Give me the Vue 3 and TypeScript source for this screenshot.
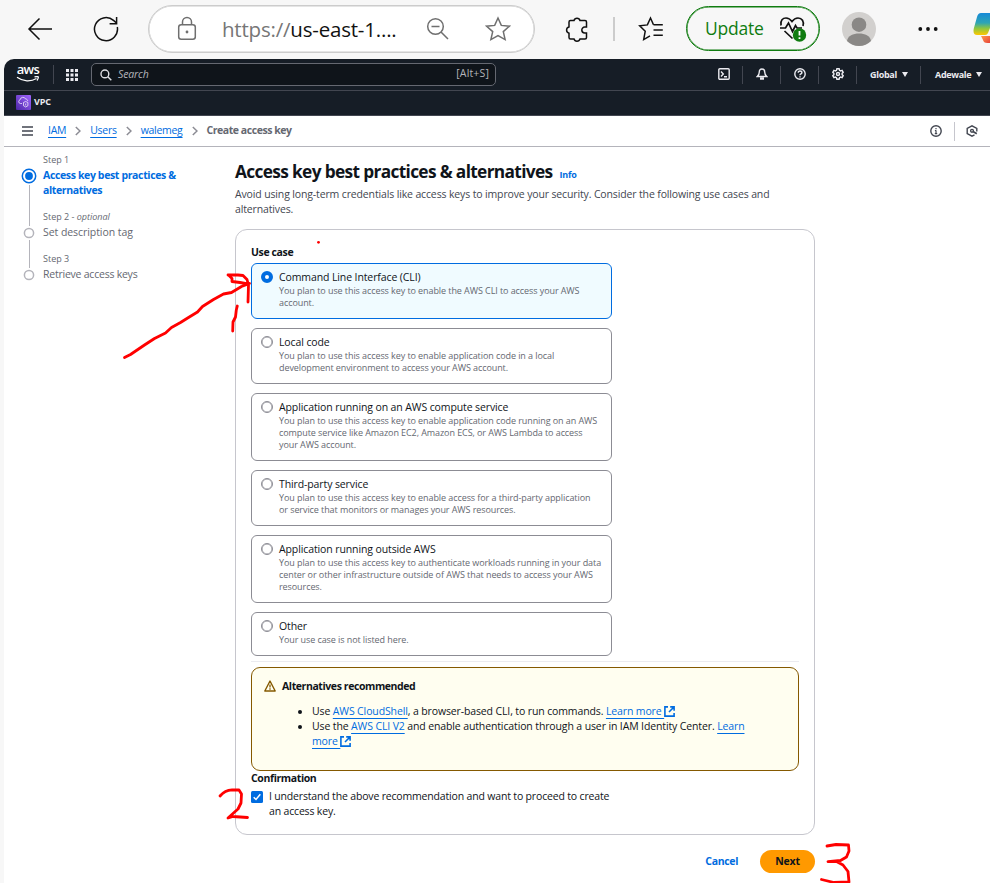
<script setup lang="ts">
import { ref } from 'vue'

interface UseCase {
  id: string
  title: string
  lines: string[]
}

const useCases: UseCase[] = [
  { id: 'cli', title: 'Command Line Interface (CLI)', lines: ['You plan to use this access key to enable the AWS CLI to access your AWS', 'account.'] },
  { id: 'local', title: 'Local code', lines: ['You plan to use this access key to enable application code in a local', 'development environment to access your AWS account.'] },
  { id: 'compute', title: 'Application running on an AWS compute service', lines: ['You plan to use this access key to enable application code running on an AWS', 'compute service like Amazon EC2, Amazon ECS, or AWS Lambda to access', 'your AWS account.'] },
  { id: 'third', title: 'Third-party service', lines: ['You plan to use this access key to enable access for a third-party application', 'or service that monitors or manages your AWS resources.'] },
  { id: 'outside', title: 'Application running outside AWS', lines: ['You plan to use this access key to authenticate workloads running in your data', 'center or other infrastructure outside of AWS that needs to access your AWS', 'resources.'] },
  { id: 'other', title: 'Other', lines: ['Your use case is not listed here.'] },
]

const crumbs = ['IAM', 'Users', 'walemeg']
const selected = ref('cli')
const confirmed = ref(true)
</script>

<template>
  <div class="window">
    <header class="browser">
      <svg class="b-back" width="26" height="24" viewBox="0 0 26 24"><path d="M25 12H2M12.500 1.500 2 12l10.500 10.500" /></svg>
      <svg class="b-reload" width="26" height="26" viewBox="0 0 26 26"><path d="M24.300 11A11.500 11.500 0 1 1 20.500 4.400L23.500 7M23.600 1v6.700h-7" /></svg>
      <div class="address">
        <svg class="b-lock" width="20" height="26" viewBox="0 0 20 26"><rect x="1.700" y="8.700" width="16.600" height="14.600" rx="2.500" /><path d="M5.500 8.500V6a4.500 4.500 0 0 1 9 0v2.500" /><circle cx="10" cy="16" r="1.400" /></svg>
        <span class="url">https://<b>us-east-1....</b></span>
        <svg class="b-zoom" width="24" height="24" viewBox="0 0 24 24"><circle cx="9.500" cy="9.500" r="7.800" /><path d="M15 15l7 7M5.500 9.500h8" /></svg>
        <svg class="b-star" width="26" height="26" viewBox="0 0 26 26"><path d="M13 2l3.300 7.400 8 .8-6 5.400 1.800 8L13 19.500 5.900 23.600l1.800-8-6-5.400 8-.8z" /></svg>
      </div>
      <svg class="b-puzzle" width="24" height="26" viewBox="0 0 24 26"><path d="M5.500 4.600H9a3.100 3.100 0 0 1 6 0h5q1.500 0 1.500 1.500v5h-1.800a2.900 2.900 0 0 0 0 5.800h1.800v4.500q0 1.500-1.500 1.500h-5a3.100 3.100 0 0 1-6 0H5.500Q4 22.900 4 21.400v-4.200a3.200 3.200 0 0 1 0-6.200V6.100q0-1.500 1.500-1.500z" /></svg>
      <i class="b-sep"></i>
      <svg class="b-fav" width="26" height="26" viewBox="0 0 26 26"><path d="M15.500 8.800 12.500 2 9.400 8.900 1.700 9.800l5.500 5.500-1.500 8.300 6.300-3.700M15.500 8.800h9.300M15.500 14h9.300M15.500 19.200h9.300" /></svg>
      <div class="update">
        <span>Update</span>
        <svg width="28" height="26" viewBox="0 0 28 26">
          <path class="heart" d="M2 9.500C1 4 4 2 7 2c2.500 0 4.500 1.500 6 3.500C14.500 3.500 16.500 2 19 2c4 0 6.300 3.500 5 8M1 12h5.500l3-5 4 8.500 3-6 1.500 2.500H23M5.500 15l8 7.500" />
          <circle class="badge" cx="20.500" cy="19" r="6.700" />
          <path class="bang" d="M20.500 15v4.500M20.500 21.300v1.600" />
        </svg>
      </div>
      <svg class="b-avatar" width="34" height="34" viewBox="0 0 34 34"><circle cx="17" cy="17" r="17" fill="#d2d0ce" /><circle cx="17" cy="12.700" r="7.300" fill="#8a8886" /><path d="M5 29C6 23.500 11 21.500 17 21.500S28 23.500 29 29A17 17 0 0 1 5 29z" fill="#8a8886" /></svg>
      <svg class="b-more" width="20" height="6" viewBox="0 0 20 6"><circle cx="2.300" cy="3" r="1.900" /><circle cx="10" cy="3" r="1.900" /><circle cx="17.700" cy="3" r="1.900" /></svg>
      <svg class="b-copilot" width="17" height="34" viewBox="0 0 17 34">
        <defs>
          <linearGradient id="cp" x1="0" y1="0" x2="0" y2="1"><stop offset="0" stop-color="#1689d8" /><stop offset=".45" stop-color="#2da5b5" /><stop offset=".7" stop-color="#8ec63f" /><stop offset="1" stop-color="#ffc800" /></linearGradient>
          <linearGradient id="cq" x1="0" y1="0" x2="1" y2="1"><stop offset="0" stop-color="#ff9a4d" /><stop offset="1" stop-color="#e8443a" /></linearGradient>
        </defs>
        <path d="M8 24h9v7h-2.500c-3 0-4-1-4.700-3.500z" fill="url(#cq)" />
        <path d="M8 1h9v15l-2 5q-.8 2-2.800 2H4Q-.5 23 .8 16.500L4 5q1-4 4-4z" fill="url(#cp)" />
      </svg>
    </header>

    <div class="page">
      <nav class="topnav">
        <div class="logo">
          <span>aws</span>
          <svg width="24" height="7" viewBox="0 0 24 7"><path d="M1 1.300c6 4.400 14 4.500 19.500 1.200M18.500.9c2-.5 4-.5 3.900.2s-.6 2.400-1.500 3.400" /></svg>
        </div>
        <i class="v-sep"></i>
        <svg class="apps" width="12" height="12" viewBox="0 0 12 12"><path d="M0 0h3v3H0zM4.500 0h3v3h-3zM9 0h3v3H9zM0 4.500h3v3H0zM4.500 4.500h3v3h-3zM9 4.500h3v3H9zM0 9h3v3H0zM4.500 9h3v3h-3zM9 9h3v3H9z" /></svg>
        <div class="search">
          <svg width="12" height="12" viewBox="0 0 12 12"><circle cx="4.900" cy="4.900" r="3.900" /><path d="M7.800 7.800l3.500 3.500" /></svg>
          <em>Search</em>
          <span>[Alt+S]</span>
        </div>
        <div class="tools">
          <div class="tool"><svg width="12" height="12" viewBox="0 0 12 12"><rect x=".8" y=".8" width="10.400" height="10.400" rx="1" /><path d="M3 3.500 5.300 6 3 8.500M6 8.800h3" /></svg></div>
          <div class="tool"><svg width="12" height="12" viewBox="0 0 12 12"><path d="M6 1C4 1 3.300 2.500 3.300 4c0 2.200-.8 3.300-2 4.500h9.400C9.500 7.300 8.700 6.200 8.700 4 8.700 2.500 8 1 6 1z" /><path d="M4.700 10h2.600v1H4.700z" fill="#ebebf0" /></svg></div>
          <div class="tool"><svg width="12" height="12" viewBox="0 0 12 12"><circle cx="6" cy="6" r="5.200" /><path d="M4.200 4.800C4.200 3.600 5 3 6 3s1.900.7 1.900 1.700C7.900 6 6 5.900 6 7.200M6 8.200v1.300" /></svg></div>
          <div class="tool"><svg width="12" height="12" viewBox="0 0 12 12"><path d="M4.900.8h2.200l.4 1.500 1.100.6 1.500-.5 1.100 1.900L10.100 5.400v1.200l1.100 1.100-1.100 1.900-1.500-.5-1.100.6-.4 1.500H4.900l-.4-1.500-1.100-.6-1.500.5L.8 7.700l1.100-1.100V5.400L.8 4.300l1.100-1.900 1.500.5 1.100-.6z" /><circle cx="6" cy="6" r="1.500" /></svg></div>
          <div class="tool region">Global<i class="caret"></i></div>
          <div class="tool account">Adewale<i class="caret"></i></div>
        </div>
      </nav>
      <div class="favbar">
        <svg width="15" height="15" viewBox="0 0 15 15">
          <defs><linearGradient id="vp" x1="0" y1="1" x2="1" y2="0"><stop offset="0" stop-color="#4d27a8" /><stop offset="1" stop-color="#a166ff" /></linearGradient></defs>
          <rect width="15" height="15" rx="1" fill="url(#vp)" />
          <path d="M6 8.500H4.300a1.900 1.900 0 0 1-.2-3.700A2.900 2.900 0 0 1 9.600 4c1.300 0 2 .8 2.100 2M7.500 7.500 9.700 6.500l2.200 1v3.200L9.700 12l-2.200-1.300zM9.700 8.500v2" fill="none" stroke="#fff" stroke-width=".7" />
        </svg>
        <span>VPC</span>
      </div>

      <div class="crumbbar">
        <svg class="burger" width="11" height="10" viewBox="0 0 11 10"><path d="M0 1h11M0 5h11M0 9h11" /></svg>
        <template v-for="c in crumbs" :key="c">
          <a class="crumb" href="#">{{ c }}</a>
          <svg class="chev" width="6" height="10" viewBox="0 0 6 10"><path d="M.8 1 5 5 .8 9" /></svg>
        </template>
        <span class="current">Create access key</span>
        <div class="crumbtools">
          <svg width="12" height="12" viewBox="0 0 12 12"><circle cx="6" cy="6" r="5.200" /><path d="M6 5.300v3.600M6 2.900v1.300M4.900 5.500H6M4.800 8.600h2.400" stroke-width="1.200" /></svg>
          <i></i>
          <svg width="12" height="12" viewBox="0 0 12 12"><path d="M10.800 6.500V3.400L6 .8 1.200 3.400v5.200L6 11.200l2.500-1.300" /><circle cx="6" cy="5.800" r="1.400" /><path d="M7 6.500l3.800 2.300" stroke-width="1.800" /></svg>
        </div>
      </div>

      <div class="body">
        <aside class="steps">
          <div class="step active">
            <div class="rail"><svg width="16" height="16" viewBox="0 0 16 16"><circle cx="8" cy="8" r="6.700" /><circle class="fill" cx="8" cy="8" r="3.900" /></svg><i></i></div>
            <div class="steptext"><small>Step 1</small><strong>Access key best practices &amp;<br>alternatives</strong></div>
          </div>
          <div class="step">
            <div class="rail"><svg width="16" height="12" viewBox="0 0 16 12"><circle cx="8" cy="6" r="4.600" /></svg><i></i></div>
            <div class="steptext"><small>Step 2 - <em>optional</em></small><span>Set description tag</span></div>
          </div>
          <div class="step last">
            <div class="rail"><svg width="16" height="12" viewBox="0 0 16 12"><circle cx="8" cy="6" r="4.600" /></svg></div>
            <div class="steptext"><small>Step 3</small><span class="tight">Retrieve access keys</span></div>
          </div>
        </aside>

        <main class="content">
          <h1>Access key best practices &amp; alternatives<a href="#">Info</a></h1>
          <p class="lead">Avoid using long-term credentials like access keys to improve your security. Consider the following use cases and<br>alternatives.</p>

          <section class="panel">
            <h2>Use case</h2>
            <div class="cards">
              <div v-for="u in useCases" :key="u.id" class="card" :class="{ on: selected === u.id }" @click="selected = u.id">
                <i class="radio"></i>
                <div>
                  <div class="cardtitle">{{ u.title }}</div>
                  <div v-for="l in u.lines" :key="l" class="desc">{{ l }}</div>
                </div>
              </div>
            </div>
            <hr>
            <div class="alert">
              <div class="alerthead">
                <svg width="12" height="12" viewBox="0 0 12 12"><path d="M6 1 11.200 11H.8z" /><path d="M6 4.500v3M6 8.300v1.400" stroke-width="1.300" /></svg>
                <b>Alternatives recommended</b>
              </div>
              <ul>
                <li>Use <a href="#">AWS CloudShell</a>, a browser-based CLI, to run commands. <a href="#">Learn more </a><svg class="ext" width="11" height="11" viewBox="0 0 11 11"><path d="M4 .9H.9v9.200h9.200V7M6.200.9h3.900v3.900M10 1 5 6" /></svg></li>
                <li>Use the <a href="#">AWS CLI V2</a> and enable authentication through a user in IAM Identity Center. <a href="#">Learn</a><br><a href="#">more </a><svg class="ext" width="11" height="11" viewBox="0 0 11 11"><path d="M4 .9H.9v9.200h9.200V7M6.200.9h3.900v3.900M10 1 5 6" /></svg></li>
              </ul>
            </div>
            <h2 class="conf">Confirmation</h2>
            <div class="check" @click="confirmed = !confirmed">
              <svg width="12" height="12" viewBox="0 0 12 12"><rect width="12" height="12" rx="1.500" fill="#006ce0" /><path v-if="confirmed" d="M2.700 6.200 5 8.500 9.300 3.300" fill="none" stroke="#fff" stroke-width="1.500" /></svg>
              <span>I understand the above recommendation and want to proceed to create<br>an access key.</span>
            </div>
          </section>

          <div class="actions"><a href="#">Cancel</a><button type="button">Next</button></div>
        </main>
      </div>
    </div>

    <svg class="ink" width="990" height="883" viewBox="0 0 990 883">
      <circle cx="318.500" cy="242.300" r="1.400" />
      <path d="M124.500 357.500l6-3 14-9.500 10-6.500 11-5.500 6-5.500 9-5 8-5 9-5.500 5-5.500 11-7 10-5.500 8-1.500 10-6 8-3M228 275h10l5 .5 4 4 1.500 5.500-.5 17M229 275.500l3 3 0 3 8 1 8 1.500" />
      <path d="M237.300 306l-1 4-.8 7-2.500 5-.3 9" />
      <path d="M220 796q5-6 12-6.200l7 .2 2.500 4-.5 9-3 6-10 9 5-1.500 14.500 1" />
      <path d="M827 846l9-1.500 12.500.5.500 6-2.500 6-6 3.500-12.500 1.200h9l6 3.300 5 6.500 1 10.500-15 .5-12.500-3" />
    </svg>
  </div>
</template>

<style>
body { overflow: hidden; background: #f7f7f7; }
</style>

<style scoped>
.window { position: relative; width: 990px; height: 883px; overflow: hidden; background: #f7f7f7; font: 10.5px/15px "Open Sans", "Noto Sans", sans-serif; letter-spacing: -.14px; color: #0f141a; white-space: nowrap; }
.window * { box-sizing: border-box; }
svg { display: block; flex: none; fill: none; stroke: currentColor; }
a { color: #006ce0; text-decoration: underline; text-decoration-thickness: 1px; text-underline-offset: 3px; text-decoration-skip-ink: none; }

.browser { display: flex; align-items: center; height: 59px; padding: 0 0 2px 27px; color: #111; }
.browser svg { stroke-width: 1.5; }
.b-reload { margin-left: 40px; }
.address { display: flex; align-items: center; width: 387px; height: 48px; margin-left: 29px; padding-left: 28px; border: 1px solid #ccc; border-radius: 24px; background: #fff; box-shadow: inset 0 0 0 .5px #ccc; color: #6f6f6f; }
.b-lock circle { fill: #6f6f6f; stroke: none; }
.url { width: 180px; margin-left: 25px; font-size: 20.5px; line-height: 30px; letter-spacing: -.2px; color: #767676; }
.url b { font-weight: 400; color: #111; }
.b-zoom { margin-left: 24px; }
.b-star { margin-left: 35px; }
.b-puzzle { margin-left: 30px; }
.b-sep { width: 2px; height: 24px; margin-left: 24px; background: #ccc; }
.b-fav { margin-left: 23px; }
.update { display: flex; align-items: center; width: 134px; height: 45px; margin-left: 22px; padding-left: 18px; border: 1px solid #107c10; border-radius: 23px; box-shadow: inset 0 0 0 .5px #107c10; color: #107c10; font-size: 17.5px; letter-spacing: -.25px; }
.update span { width: 74px; }
.update .heart { stroke: #111; stroke-width: 1.7; }
.update .badge { fill: #107c10; stroke: none; }
.update .bang { stroke: #fff; stroke-width: 1.8; }
.b-avatar { margin-left: 22px; stroke: none; }
.b-more { margin-left: 42px; fill: #111; stroke: none; }
.b-copilot { margin-left: 35px; stroke: none; }

.page { height: 824px; margin-left: 4px; border-radius: 10px 0 0; background: #fff; overflow: hidden; }
.topnav { display: flex; align-items: center; height: 32px; padding-left: 12px; border-bottom: 1px solid #424650; background: #161d26; color: #ebebf0; }
.logo { width: 24px; margin-right: 13px; color: #fff; }
.logo span { display: block; height: 10px; font-size: 13px; font-weight: 600; line-height: 7px; letter-spacing: -.6px; text-align: center; }
.logo svg { stroke-width: 1.2; }
.v-sep { width: 1px; height: 19px; background: #424650; }
.apps { margin: 0 13px 0 12px; fill: #ebebf0; stroke: none; }
.search { display: flex; align-items: center; width: 405px; height: 23px; padding: 0 6px 0 8px; border: 1px solid #656871; border-radius: 5px; background: #0f141a; color: #b4b4bb; }
.search svg { stroke: #dedee3; stroke-width: 1.4; }
.search em { margin-left: 6px; padding-bottom: 1px; font-size: 10.5px; }
.search span { margin-left: auto; padding-bottom: 2px; font-size: 10.5px; letter-spacing: .15px; }
.tools { display: flex; margin-left: auto; width: 285px; }
.tool { display: flex; align-items: center; justify-content: center; width: 38px; height: 18px; padding-bottom: 1px; border-right: 1px solid #424650; font-size: 9px; font-weight: 700; letter-spacing: -.3px; }
.tool svg { stroke-width: 1.4; }
.tool.region { width: 64px; justify-content: flex-start; padding-left: 13px; }
.tool.account { width: 69px; justify-content: flex-start; padding-left: 14px; border: 0; }
.caret { margin-left: 5px; border: 3px solid transparent; border-top: 5px solid #ebebf0; border-bottom: 0; }
.favbar { display: flex; align-items: center; height: 25px; padding: 0 0 2px 12px; border-bottom: 1px solid #424650; background: #161d26; color: #ebebf0; font-size: 9px; font-weight: 700; }
.favbar svg { stroke: none; }
.favbar span { margin-left: 3px; padding-bottom: 1px; }

.crumbbar { display: flex; align-items: center; height: 31px; padding-left: 18px; border-bottom: 1px solid #b4b4bb; }
.burger { margin-right: 15px; stroke: #424650; stroke-width: 1.4; }
.crumb { padding-bottom: 2px; letter-spacing: -.28px; }
.chev { margin: 0 9px; stroke: #8c8c94; stroke-width: 1.5; }
.current { padding-bottom: 2px; font-weight: 700; letter-spacing: -.45px; color: #656871; }
.crumbtools { display: flex; align-items: center; margin-left: auto; padding-right: 12px; color: #424650; }
.crumbtools svg { stroke-width: 1.4; }
.crumbtools i { width: 1px; height: 19px; margin: 0 11px 0 12px; background: #c6c6cd; }

.body { display: flex; }
.steps { width: 231px; padding: 6px 0 0 17px; color: #656871; }
.step { display: flex; height: 42px; }
.step.active { height: 57px; }
.rail { display: flex; flex-direction: column; align-items: center; width: 16px; margin-right: 6px; padding-top: 17px; }
.step.active .rail { padding-top: 15px; }
.rail svg { stroke: #b4b4bb; stroke-width: 1.5; }
.active .rail svg { stroke: #006ce0; }
.active .rail .fill { fill: #006ce0; stroke: none; }
.rail i { flex: 1; width: 1px; margin: 1px 0 -16px; background: #b4b4bb; }
.steptext small { display: block; margin-bottom: 2px; padding-top: 1px; font-size: 9px; line-height: 12px; letter-spacing: 0; }
.steptext strong { color: #006ce0; font-weight: 700; letter-spacing: -.36px; }
.steptext span { letter-spacing: -.06px; }
.steptext .tight { letter-spacing: -.23px; }

.content { width: 580px; padding-top: 13px; }
h1 { margin: 0 0 4px; font-size: 17.3px; line-height: 24px; height: 23px; font-weight: 700; letter-spacing: -.65px; }
h1 a { margin-left: 7px; font-size: 9px; line-height: 0; letter-spacing: -.25px; text-decoration: none; }
.lead { margin: 0; color: #424650; }
.panel { height: 606px; margin-top: 12px; padding: 15px 15px 13px; border: 1px solid #c6c6cd; border-radius: 12px; }
h2 { margin: 0; font-size: 10.5px; line-height: 15px; font-weight: 700; letter-spacing: -.38px; }
.cards { display: flex; flex-direction: column; gap: 9px; width: 361px; margin-top: 3px; }
.card { display: flex; padding: 6px 0 9px 9px; border: 1px solid #8c8c94; border-radius: 6px; }
.card.on { border-color: #006ce0; background: #f0fbff; }
.radio { width: 12px; height: 12px; margin: 1px 6px 0 0; border: 1px solid #8c8c94; border-radius: 50%; background: #fff; box-shadow: inset 0 0 0 .5px #8c8c94; }
.on .radio { border: 4px solid #006ce0; box-shadow: none; }
.cardtitle { letter-spacing: -.11px; }
.desc { font-size: 9px; line-height: 12px; letter-spacing: -.08px; color: #656871; }
hr { height: 1px; margin: 5px 0; border: 0; background: #ebebf0; }
.alert { height: 104px; padding: 11px 12px; border: 1px solid #855900; border-radius: 9px; background: #fffef0; }
.alerthead { display: flex; align-items: center; gap: 6px; }
.alerthead b { font-weight: 700; letter-spacing: -.41px; }
.alerthead svg { margin-top: -2px; stroke: #855900; stroke-width: 1.4; stroke-linejoin: round; }
ul { margin: 10px 0 0; padding-left: 48px; letter-spacing: -.125px; }
.ext { display: inline-block; vertical-align: -1.5px; stroke: #006ce0; stroke-width: 1.6; }
.check { display: flex; margin-top: 3px; letter-spacing: -.17px; }
.check svg { margin: 2px 6px 0 0; stroke: none; }
.actions { display: flex; align-items: center; justify-content: flex-end; gap: 22px; margin-top: 15px; font-weight: 700; letter-spacing: -.35px; }
.actions a { text-decoration: none; }
button { width: 55px; height: 23px; padding: 0; border: 0; border-radius: 12px; background: #ff9900; color: #0f141a; font: inherit; letter-spacing: -.2px; }

.ink { position: absolute; left: 0; top: 0; pointer-events: none; color: #f00; stroke-width: 2.8; stroke-linecap: round; stroke-linejoin: round; }
.ink circle { fill: #f00; stroke: none; }
</style>
